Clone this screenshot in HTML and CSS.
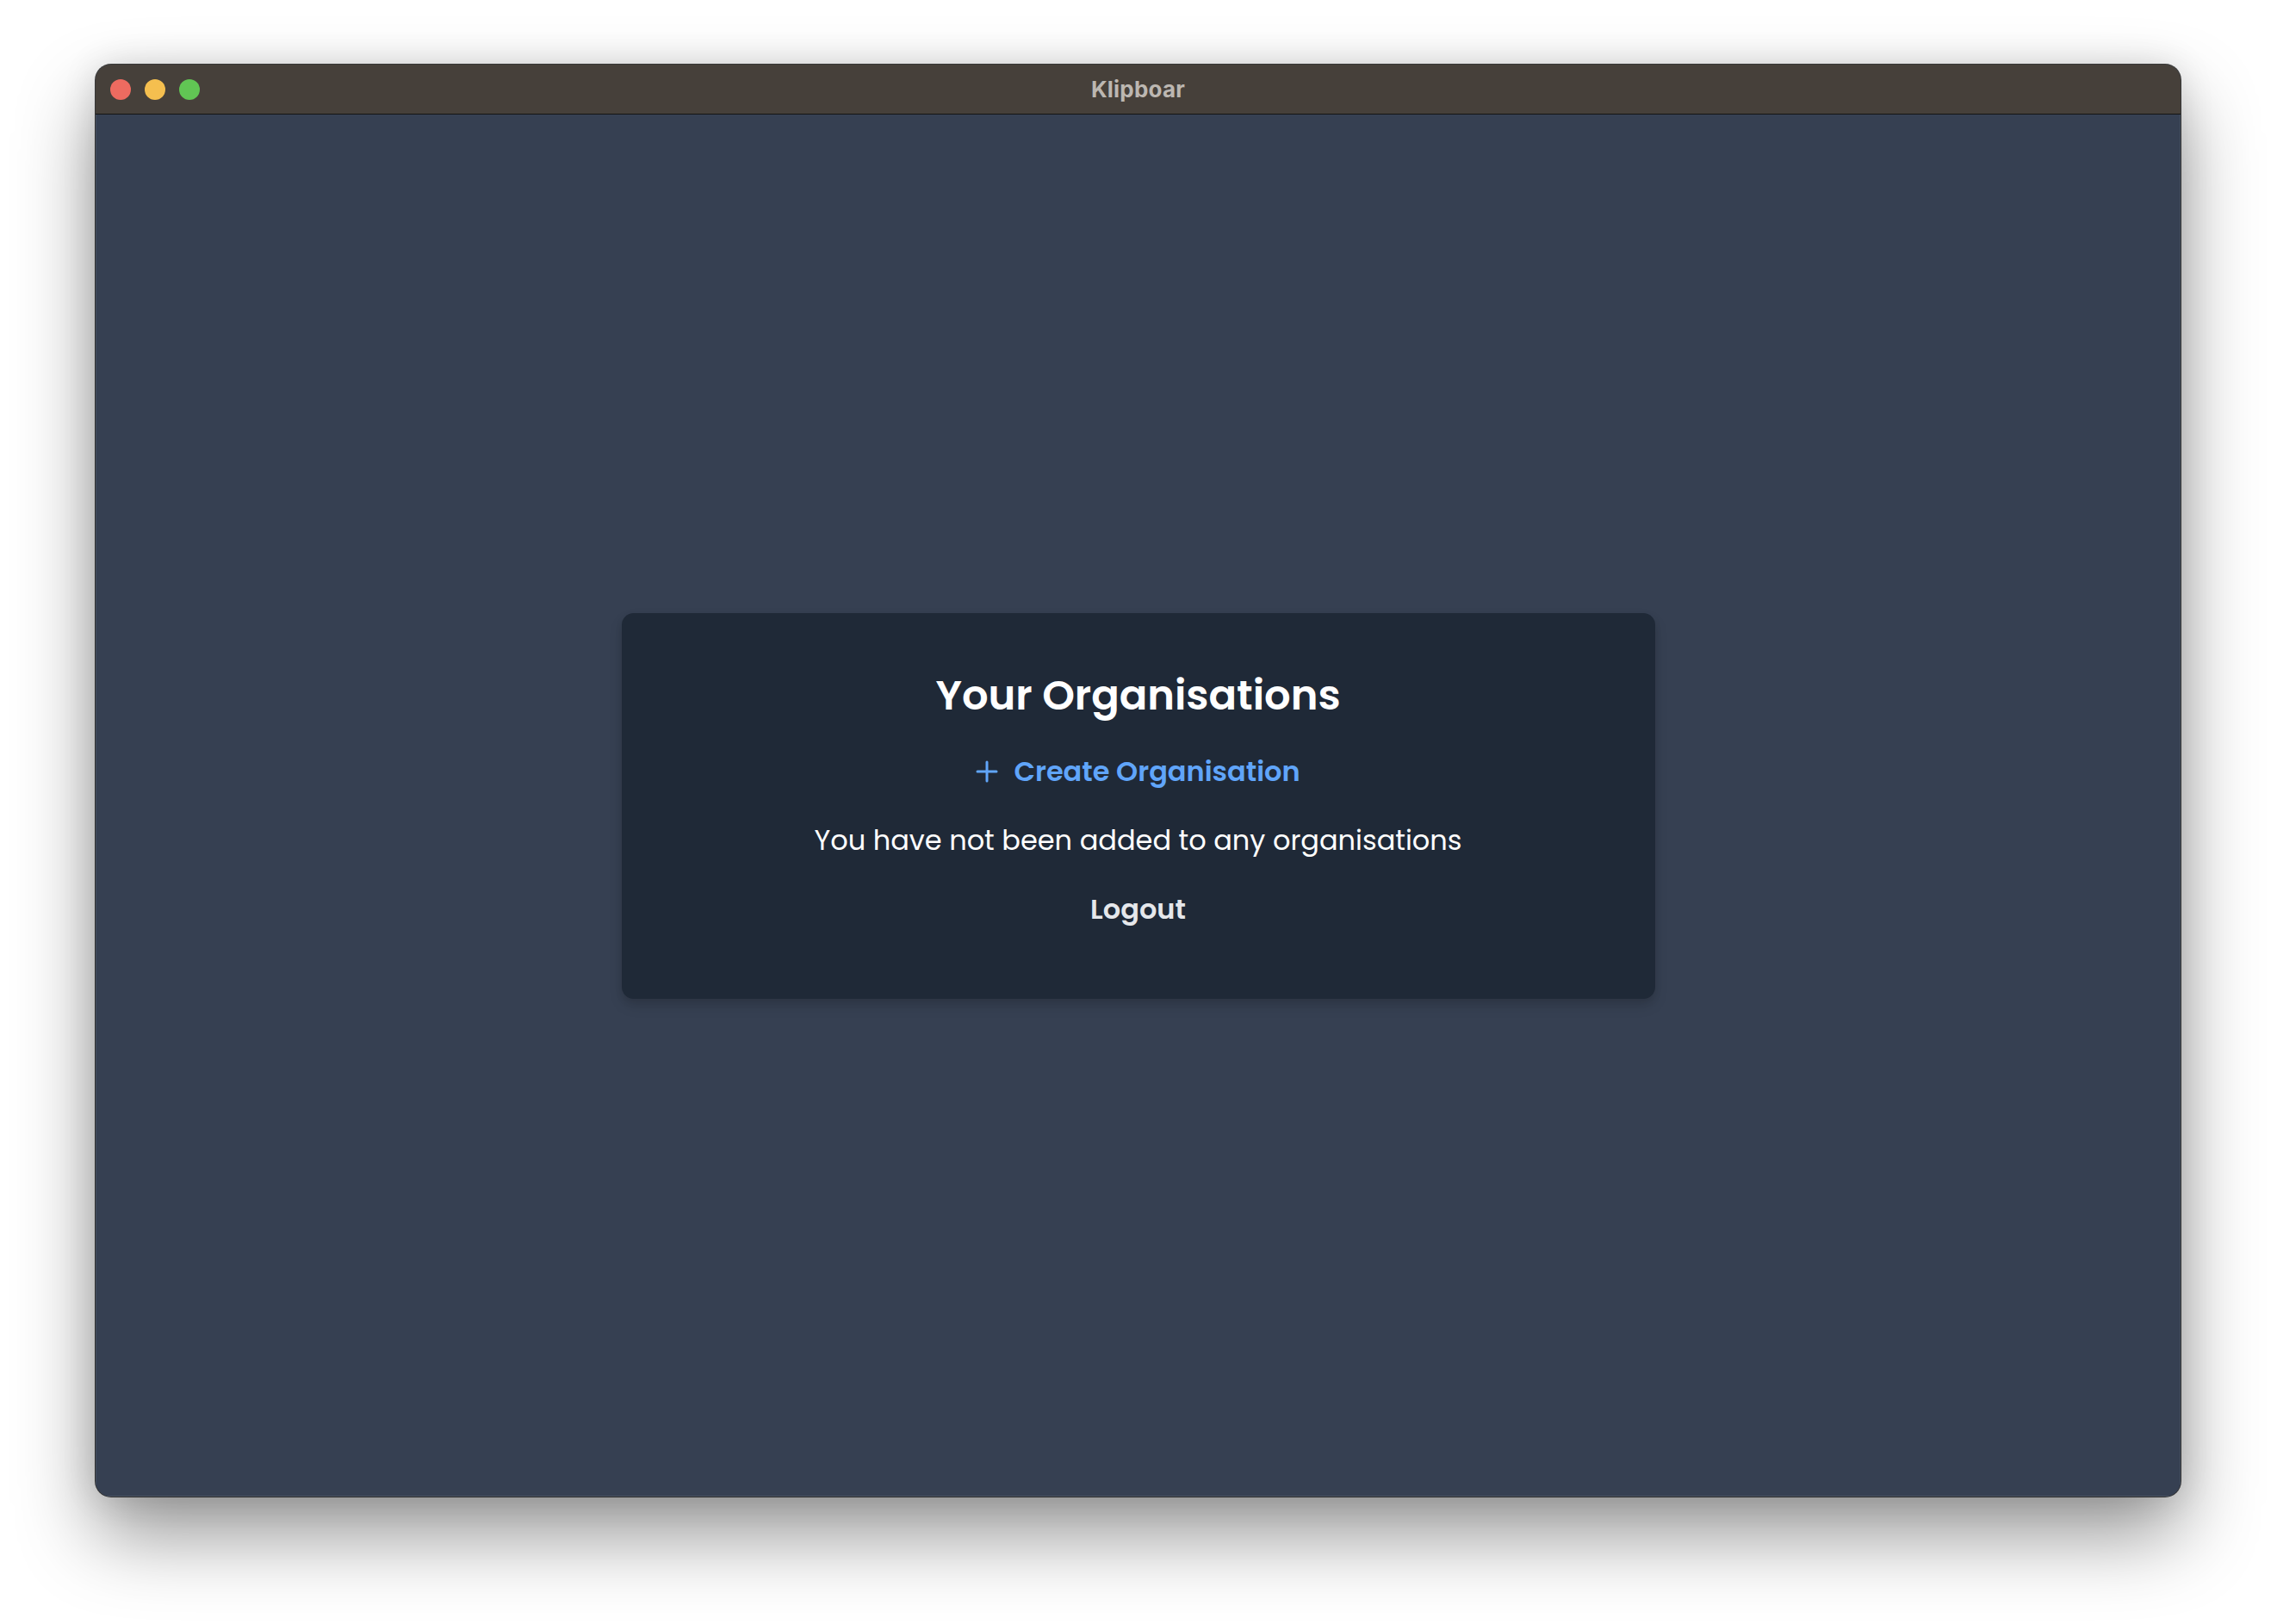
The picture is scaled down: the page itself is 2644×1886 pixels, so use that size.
FILE: index.html
```html
<!DOCTYPE html>
<html lang="en">
<head>
<meta charset="utf-8">
<title>Klipboar</title>
<link rel="stylesheet" href="styles.css">
</head>
<body>
<div class="stage">
  <div class="window">
    <div class="titlebar">
      <div class="lights">
        <span class="light red"></span>
        <span class="light yellow"></span>
        <span class="light green"></span>
      </div>
      <div class="title">Klipboar</div>
    </div>
    <main class="content">
      <section class="card">
        <h1 class="heading">Your Organisations</h1>
        <a class="create" href="#">
          <svg class="plus" viewBox="0 0 26 26" width="26" height="26" aria-hidden="true">
            <path d="M13 2v22M2 13h22" stroke="currentColor" stroke-width="3" stroke-linecap="round" fill="none"/>
          </svg>
          <span>Create Organisation</span>
        </a>
        <p class="empty">You have not been added to any organisations</p>
        <button class="logout" type="button">Logout</button>
      </section>
    </main>
  </div>
</div>
</body>
</html>
```

FILE: styles.css
```css
html, body {
  margin: 0;
  padding: 0;
  background: #ffffff;
}

.stage {
  width: 2644px;
  height: 1886px;
  box-sizing: border-box;
  padding: 75px 112px 0 111px;
}

.window {
  width: 2421px;
  height: 1663px;
  border-radius: 18px;
  overflow: hidden;
  display: flex;
  flex-direction: column;
  box-shadow: 0 0 0 1px rgba(0, 0, 0, 0.75), 0 44px 90px rgba(0, 0, 0, 0.42), 0 0 40px rgba(0, 0, 0, 0.12);
  background: #374151;
}

.titlebar {
  position: relative;
  height: 57px;
  flex: none;
  background: #46403a;
  border-bottom: 1px solid #141414;
  display: flex;
  align-items: center;
  justify-content: center;
}

.lights {
  position: absolute;
  left: 17px;
  top: 0;
  height: 57px;
  display: flex;
  align-items: center;
  gap: 16px;
}

.light {
  width: 24px;
  height: 24px;
  border-radius: 50%;
  display: block;
}
.red { background: #ee6b60; }
.yellow { background: #f5bf4f; }
.green { background: #61c554; }

.title {
  font-family: Inter, "Liberation Sans", sans-serif;
  font-weight: 700;
  font-size: 26px;
  color: #bcb7b1;
  letter-spacing: 0.2px;
}

.content {
  flex: 1;
  display: flex;
  align-items: center;
  justify-content: center;
  background: #364052;
  box-shadow: inset 1px 0 0 rgba(255,255,255,0.08), inset -1px 0 0 rgba(255,255,255,0.08), inset 0 -1px 0 rgba(255,255,255,0.12);
}

.card {
  width: 1200px;
  box-sizing: border-box;
  padding: 64px 64px 64px;
  background: #1f2937;
  border-radius: 14px;
  box-shadow: 0 8px 16px rgba(0, 0, 0, 0.12), 0 4px 8px rgba(0, 0, 0, 0.08);
  display: flex;
  flex-direction: column;
  align-items: center;
  font-family: Poppins, Inter, "Noto Sans", sans-serif;
}

.heading {
  margin: 0;
  font-size: 48px;
  line-height: 64px;
  font-weight: 600;
  color: #ffffff;
}

.create {
  margin-top: 32px;
  display: flex;
  align-items: center;
  gap: 18px;
  height: 48px;
  font-size: 32px;
  line-height: 48px;
  font-weight: 600;
  color: #60a5fa;
  text-decoration: none;
}

.plus {
  display: block;
  color: #60a5fa;
}

.empty {
  margin: 32px 0 0;
  font-size: 32px;
  line-height: 48px;
  font-weight: 400;
  color: #ffffff;
}

.logout {
  margin-top: 16px;
  padding: 16px 32px;
  border: 0;
  background: transparent;
  font-family: inherit;
  font-size: 32px;
  line-height: 48px;
  font-weight: 600;
  color: #e5e7eb;
  cursor: pointer;
}
```
